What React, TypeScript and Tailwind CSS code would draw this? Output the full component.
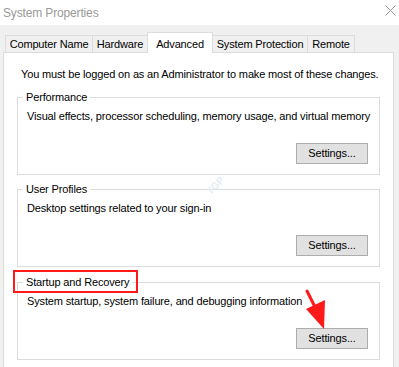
import React from "react";

const font = { fontFamily: '"Liberation Sans", Arial, sans-serif', letterSpacing: "-0.15px" };

function Group({ title, text, extra }: { title: string; text: string; extra?: string }) {
  return (
    <div className={`border border-[#dcdcdc] h-[78px] px-[9px] ${extra ?? ""}`}>
      <div className="-mt-[8px] -ml-[4px] flex">
        <span className="bg-white px-[3px] text-[11px] leading-[14px] text-black">{title}</span>
      </div>
      <div className="text-[11px] leading-[14px] text-black mt-[5px] whitespace-nowrap">{text}</div>
      <div className="flex justify-end mt-[20px] mr-[2px]">
        <button className="w-[72px] h-[21px] bg-[#e1e1e1] border border-[#adadad] text-[11px] text-black leading-none">
          Settings...
        </button>
      </div>
    </div>
  );
}

const tabs: { t: string; w: string }[] = [
  { t: "Computer Name", w: "w-[88px]" },
  { t: "Hardware", w: "w-[56px]" },
  { t: "Advanced", w: "w-[66px]" },
  { t: "System Protection", w: "w-[96px]" },
  { t: "Remote", w: "w-[48px]" },
];

export default function App() {
  return (
    <div className="w-[399px] h-[367px] bg-[#f0f0f0] overflow-hidden relative" style={font}>
      <div className="h-[25px] bg-white flex items-center justify-between pl-[3px] pr-[3px]">
        <span className="text-[12px] text-[#999999]">System Properties</span>
        <svg width="11" height="11" viewBox="0 0 11 11" className="mt-[-4px]">
          <path d="M0.5 0.5 L10.5 10.5 M10.5 0.5 L0.5 10.5" stroke="#999" strokeWidth="1" />
        </svg>
      </div>
      <div className="flex items-end pl-[6px] h-[27px]">
        {tabs.map(({ t, w }) => {
          const sel = t === "Advanced";
          return (
            <div
              key={t}
              className={
                sel
                  ? `${w} h-[21px] bg-white border border-b-0 border-[#dcdcdc] -ml-px text-[11px] text-black flex justify-center items-start pt-[3px] relative z-10 -mb-px`
                  : `${w} h-[17px] border border-b-0 border-[#dcdcdc] -ml-px text-[11px] text-black flex justify-center items-center`
              }
            >
              {t}
            </div>
          );
        })}
      </div>
      <div className="ml-[3px] mr-[5px] h-[320px] bg-white border border-[#dcdcdc] pt-[14px] px-[13px]">
        <div className="text-[11px] leading-[14px] text-black pl-[4px] whitespace-nowrap">
          You must be logged on as an Administrator to make most of these changes.
        </div>
        <div className="flex flex-col gap-[14px] mt-[16px]">
          <Group title="Performance" text="Visual effects, processor scheduling, memory usage, and virtual memory" />
          <Group title="User Profiles" text="Desktop settings related to your sign-in" />
          <Group title="Startup and Recovery" text="System startup, system failure, and debugging information" extra="mt-[1px]" />
        </div>
      </div>
      <div className="absolute left-[205px] top-[178px] -rotate-45 text-[10px] font-bold text-[#e4ecf6] tracking-normal">TGP</div>
      <div className="absolute left-[13px] top-[270px] w-[125px] h-[23px] border-2 border-[#ff1a1a]" />
      <svg className="absolute left-0 top-0" width="399" height="367" viewBox="0 0 399 367">
        <line x1="307" y1="291" x2="317" y2="311" stroke="#ff1a1a" strokeWidth="3" strokeLinecap="round" />
        <polygon points="306,309 325,300 324,329" fill="#ff1a1a" />
      </svg>
    </div>
  );
}
